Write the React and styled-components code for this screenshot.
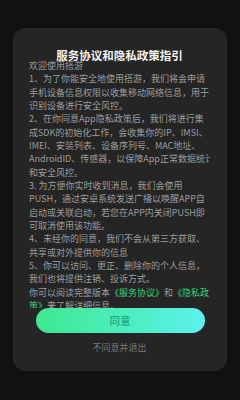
import React from "react";
import styled, { createGlobalStyle } from "styled-components";

const Global = createGlobalStyle`
  html, body { margin: 0; padding: 0; background: #111111; }
  body { width: 240px; height: 400px; overflow: hidden; font-family: "Noto Sans CJK SC", "Noto Sans", sans-serif; }
`;

const Screen = styled.div`
  width: 240px;
  height: 400px;
  background: #111111;
  padding-top: 28px;
  box-sizing: border-box;
  display: flex;
  flex-direction: column;
  align-items: center;
`;

const Card = styled.div`
  width: 214px;
  height: 343px;
  box-sizing: border-box;
  background: #252525;
  border-radius: 12px;
  padding: 23px 17px 0 16px;
  display: flex;
  flex-direction: column;
`;

const Title = styled.div`
  color: #f4f4f4;
  font-size: 11.5px;
  font-weight: 700;
  line-height: 8px;
  height: 8px;
  text-align: center;
  white-space: nowrap;
`;

const Scroll = styled.div`
  height: 249px;
  overflow: hidden;
  color: #9c9c9c;
  font-size: 9px;
  line-height: 13.33px;
`;

const Line = styled.div`
  white-space: nowrap;
`;

const Link = styled.span`
  color: #38d07c;
`;

const AgreeButton = styled.button`
  align-self: center;
  width: 169px;
  height: 25px;
  border: none;
  border-radius: 13px;
  background: linear-gradient(90deg, #3ee88f 0%, #4dedc0 55%, #5ef1ed 100%);
  color: #23a486;
  font-family: inherit;
  font-size: 10.5px;
  font-weight: 500;
  padding: 0;
  margin: 0 0 0 1px;
`;

const Decline = styled.div`
  margin-top: 8px;
  text-align: center;
  color: #767676;
  font-size: 9px;
  line-height: 13px;
`;

const lines = [
  ["欢迎使用搭游"],
  ["1、为了你能安全地使用搭游，我们将会申请"],
  ["手机设备信息权限以收集移动网络信息，用于"],
  ["识别设备进行安全风控。"],
  ["2、在你同意App隐私政策后，我们将进行集"],
  ["成SDK的初始化工作，会收集你的IP、IMSI、"],
  ["IMEI、安装列表、设备序列号、MAC地址、"],
  ["AndroidID、传感器，以保障App正常数据统计"],
  ["和安全风控。"],
  ["3. 为方便你实时收到消息，我们会使用"],
  ["PUSH，通过安卓系统发送广播以唤醒APP自"],
  ["启动或关联启动，若您在APP内关闭PUSH即"],
  ["可取消使用该功能。"],
  ["4、未经你的同意，我们不会从第三方获取、"],
  ["共享或对外提供你的信息"],
  ["5、你可以访问、更正、删除你的个人信息，"],
  ["我们也将提供注销、投诉方式。"],
  ["你可以阅读完整版本", { link: "《服务协议》" }, "和", { link: "《隐私政" }],
  [{ link: "策》" }, "来了解详细信息。"],
];

export default function App() {
  return (
    <>
      <Global />
      <Screen>
        <Card>
          <Title>服务协议和隐私政策指引</Title>
          <Scroll>
            {lines.map((segs, i) => (
              <Line key={i}>
                {segs.map((s, j) =>
                  typeof s === "string" ? (
                    <React.Fragment key={j}>{s}</React.Fragment>
                  ) : (
                    <Link key={j}>{s.link}</Link>
                  )
                )}
              </Line>
            ))}
          </Scroll>
          <AgreeButton>同意</AgreeButton>
          <Decline>不同意并退出</Decline>
        </Card>
      </Screen>
    </>
  );
}
